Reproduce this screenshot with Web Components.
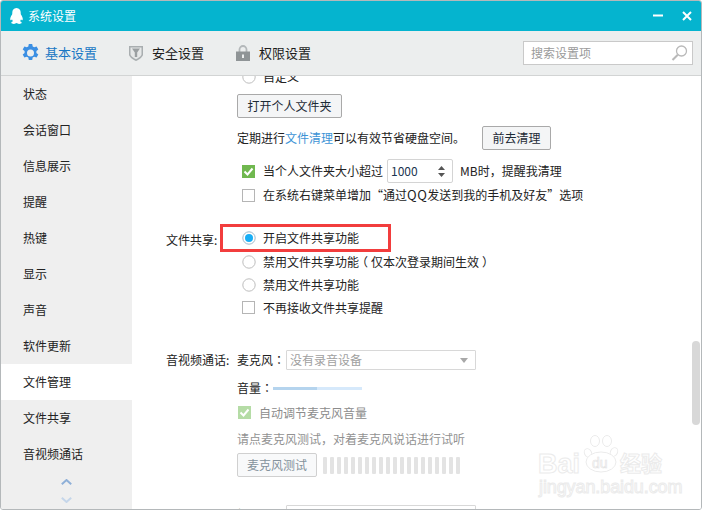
<!DOCTYPE html>
<html lang="zh-CN">
<head>
<meta charset="utf-8">
<title>系统设置</title>
<style>
  html, body { margin: 0; height: 100%; background: #fff; overflow: hidden; }
  body { font: 12px/16px "Noto Sans CJK SC", "Liberation Sans", sans-serif; color: #222; white-space: nowrap; }
</style>
</head>
<body>
<settings-window></settings-window>

<script>
class QqTitlebar extends HTMLElement {
  connectedCallback() {
    if (this.shadowRoot) return;
    this.attachShadow({ mode: "open" }).innerHTML = `
      <style>
        :host { display: flex; align-items: center; height: 30px; background: #05b4cf; color: #fff; padding: 0 0 1px 9px; box-sizing: border-box; }
        .name { margin-left: 5px; flex: 1; }
        svg { display: block; }
        .min { margin-right: 19px; }
        .close { margin-right: 9px; }
      </style>
      <svg width="13" height="16" viewBox="0 0 13 16"><path fill="#fff" d="M6.5 0C3.6 0 2.3 2.2 2.3 4.6c0 .7 0 1.3-.2 1.8C1.2 7.800 .2 9.500 .2 11c0 1 .4 1.300 .7 1.300.4 0 .8-.5 1.100-1 .1.800 .5 1.500 1 2-.8.300-1.700.8-1.700 1.500 0 .8 1.300 1.100 2.600 1.100 1.100 0 2-.3 2.600-.8.6.5 1.500.8 2.600.8 1.300 0 2.600-.3 2.600-1.100 0-.7-.9-1.200-1.700-1.500.5-.5.9-1.200 1-2 .3.500.7 1 1.100 1 .3 0 .7-.3 .7-1.300 0-1.500-1-3.200-1.900-4.600-.2-.5-.2-1.100-.2-1.800C10.700 2.200 9.400 0 6.500 0z"/></svg>
      <span class="name"><slot></slot></span>
      <svg class="min" width="10" height="3" viewBox="0 0 10 3"><rect y=".5" width="10" height="2" fill="#fff"/></svg>
      <svg class="close" width="10" height="10" viewBox="0 0 10 10"><path d="M1 1l8 8M9 1l-8 8" stroke="#fff" stroke-width="2" fill="none"/></svg>
    `;
  }
}

class QqToolbar extends HTMLElement {
  connectedCallback() {
    if (this.shadowRoot) return;
    this.attachShadow({ mode: "open" }).innerHTML = `
      <style>
        :host { display: flex; align-items: center; height: 45px; background: #eceeee; border-bottom: 1px solid #d2d4d4; box-sizing: border-box; padding-left: 21px; font-size: 13px; }
        .tab { display: flex; align-items: center; margin-right: 32px; color: #1c1c1c; }
        .tab svg { display: block; margin-right: 9px; }
        .on { color: #1877c4; }
        .on svg { margin-right: 6px; }
        .search { margin-left: auto; margin-right: 8px; width: 170px; height: 24px; box-sizing: border-box; background: #fff; border: 1px solid #c9c9c9; display: flex; align-items: center; justify-content: space-between; padding: 0 4px 0 7px; color: #9a9a9a; font-size: 12px; }
      </style>
      <div class="tab on">
        <svg width="17" height="18" viewBox="0 0 17 18"><path fill="#3b8fe3" fill-rule="evenodd" d="M6.800 0h3.400l.5 2.500 1.500.8 2.400-.9 1.700 3-1.900 1.700v1.800l1.900 1.700-1.700 3-2.400-.9-1.500.8-.5 2.500H6.800l-.5-2.500-1.500-.8-2.400.9-1.700-3 1.900-1.700V7.100L.7 5.400l1.700-3 2.400.9 1.500-.8zM8.500 5.500a3.500 3.500 0 1 0 0 7 3.500 3.500 0 0 0 0-7z"/></svg>
        基本设置
      </div>
      <div class="tab">
        <svg width="14" height="16" viewBox="0 0 14 16"><path fill="#a9aeb0" d="M0 1h14v8.500c0 2.500-4 5-7 6.500-3-1.500-7-4-7-6.500z"/><path fill="#e6e8e8" d="M1.500 2.500h11v6.800c0 1.700-3 3.700-5.500 5-2.500-1.300-5.500-3.300-5.500-5z"/><path fill="#9ba0a2" d="M3 3.500h8L8.200 7.500V12H5.800V7.500z"/></svg>
        安全设置
      </div>
      <div class="tab">
        <svg width="14" height="16" viewBox="0 0 14 16"><path fill="none" stroke="#b4b8ba" stroke-width="1.800" d="M3.500 7V4.500a3.500 3.500 0 0 1 7 0V7"/><path fill="#8f9496" fill-rule="evenodd" d="M0 6.500h14V16H0zM6 9.500v3.500h2V9.500z"/></svg>
        权限设置
      </div>
      <div class="search">
        <span>搜索设置项</span>
        <svg width="17" height="16" viewBox="0 0 17 16"><circle cx="10.500" cy="6" r="5" fill="none" stroke="#b9b9b9" stroke-width="1.300"/><path d="M6.800 9.700L1.500 15" stroke="#b9b9b9" stroke-width="2"/></svg>
      </div>
    `;
  }
}

class QqSidebar extends HTMLElement {
  connectedCallback() {
    if (this.shadowRoot) return;
    const items = ["状态", "会话窗口", "信息展示", "提醒", "热键", "显示", "声音", "软件更新", "文件管理", "文件共享", "音视频通话"];
    const rows = items.map(t => `<div class="item${t === "文件管理" ? " on" : ""}">${t}</div>`).join("");
    this.attachShadow({ mode: "open" }).innerHTML = `
      <style>
        :host { display: block; width: 131px; flex: none; background: #efefef; overflow: hidden; position: relative; }
        .item { height: 36px; line-height: 36px; padding-left: 22px; color: #222; }
        .on { background: #fff; }
        .arrows { display: flex; flex-direction: column; align-items: center; gap: 12px; margin-top: 7px; }
        svg { display: block; }
      </style>
      ${rows}
      <div class="arrows">
        <svg width="11" height="6" viewBox="0 0 11 6"><path d="M.8 5.200L5.500 1l4.700 4.200" fill="none" stroke="#8fb0d8" stroke-width="2"/></svg>
        <svg width="11" height="6" viewBox="0 0 11 6"><path d="M.8 .8L5.500 5l4.700-4.200" fill="none" stroke="#c5d6ea" stroke-width="2"/></svg>
      </div>
    `;
  }
}

class QqOption extends HTMLElement {
  connectedCallback() {
    if (this.shadowRoot) return;
    const radio = this.getAttribute("type") === "radio";
    const checked = this.hasAttribute("checked");
    const off = this.hasAttribute("disabled");
    let mark;
    if (radio) {
      mark = `<circle cx="7" cy="7" r="6.200" fill="#fff" stroke="${checked ? "#9fb8c8" : "#bdbdbd"}"/>` + (checked ? `<circle cx="7" cy="7" r="4" fill="#18aef5"/>` : "");
    } else if (checked) {
      mark = `<rect width="13" height="13" fill="${off ? "#b5dca6" : "#70b84f"}"/><path d="M2.500 6.500l3 3 5-6" fill="none" stroke="#fff" stroke-width="2"/>`;
    } else {
      mark = `<rect x=".5" y=".5" width="12" height="12" fill="#fff" stroke="#b5b5b5"/>`;
    }
    this.attachShadow({ mode: "open" }).innerHTML = `
      <style>
        :host { display: flex; align-items: center; height: var(--row, 23px); padding-left: var(--indent, 5px); color: ${off ? "#8c8c8c" : "inherit"}; }
        svg { display: block; flex: none; margin-right: ${radio ? 7 : 8}px; }
      </style>
      <svg width="${radio ? 14 : 13}" height="${radio ? 14 : 13}" viewBox="0 0 ${radio ? 14 : 13} ${radio ? 14 : 13}">${mark}</svg>
      <span><slot></slot></span>
    `;
  }
}

class QqButton extends HTMLElement {
  connectedCallback() {
    if (this.shadowRoot) return;
    this.attachShadow({ mode: "open" }).innerHTML = `
      <style>
        :host { display: inline-flex; align-items: center; justify-content: center; height: 24px; box-sizing: border-box; padding: 0 9px; background: #f4f5f6; border: 1px solid #a9a9a9; border-radius: 2px; color: #1d2b36; }
        :host([disabled]) { background: #f8f9fa; border-color: #d0d0d0; color: #84929c; }
      </style>
      <slot></slot>
    `;
  }
}

class QqSelect extends HTMLElement {
  connectedCallback() {
    if (this.shadowRoot) return;
    this.attachShadow({ mode: "open" }).innerHTML = `
      <style>
        :host { display: flex; align-items: center; justify-content: space-between; width: 190px; height: 20px; flex: none; box-sizing: border-box; border: 1px solid #d8d8d8; border-radius: 1px; padding: 0 7px 0 3px; color: #a0a0a0; }
        i { width: 0; height: 0; border: 4.500px solid transparent; border-top: 5px solid #a8a8a8; border-bottom: 0; }
      </style>
      <slot></slot><i></i>
    `;
  }
}

class QqSpinbox extends HTMLElement {
  connectedCallback() {
    if (this.shadowRoot) return;
    this.attachShadow({ mode: "open" }).innerHTML = `
      <style>
        :host { display: flex; align-items: center; justify-content: space-between; width: 66px; height: 24px; box-sizing: border-box; border: 1px solid #d4d4d4; border-radius: 2px; padding: 0 7px 0 3px; margin: 0 7px 0 4px; color: #1a3550; }
        svg { display: block; }
      </style>
      <slot></slot>
      <svg width="7" height="13" viewBox="0 0 7 13"><path d="M3.500 1L7 5H0zM0 8h7l-3.500 4z" fill="#555"/></svg>
    `;
  }
}

class BaiduMark extends HTMLElement {
  connectedCallback() {
    if (this.shadowRoot) return;
    this.attachShadow({ mode: "open" }).innerHTML = `
      <style>
        :host { position: absolute; left: 537px; top: 434px; width: 130px; height: 62px; pointer-events: none; font-family: "Liberation Sans", "Noto Sans CJK SC", sans-serif; color: #fff; -webkit-text-stroke: 1px #ebebeb; }
        .bai { position: absolute; left: 0; top: 15px; font-size: 27px; line-height: 28px; font-weight: bold; }
        .du { position: absolute; left: 54px; top: 19px; font-size: 14px; line-height: 18px; -webkit-text-stroke: .6px #e2e2e2; }
        .jy { position: absolute; left: 82px; top: 17px; font-size: 21px; line-height: 24px; font-weight: bold; }
        .url { position: absolute; left: 1px; top: 42px; font-size: 18px; line-height: 20px; white-space: nowrap; letter-spacing: -.1px; }
        svg { position: absolute; left: 45px; top: 0; }
      </style>
      <span class="bai">Bai</span>
      <svg width="36" height="38" viewBox="0 0 36 38" fill="#fff" stroke="#ebebeb">
        <ellipse cx="5" cy="18" rx="3.500" ry="4.500" transform="rotate(-25 5 18)"/>
        <ellipse cx="12" cy="6" rx="4.500" ry="5.500"/>
        <ellipse cx="24" cy="6" rx="4.500" ry="5.500"/>
        <ellipse cx="31" cy="17" rx="3.500" ry="4.500" transform="rotate(25 31 17)"/>
        <ellipse cx="18" cy="27" rx="15" ry="10"/>
      </svg>
      <span class="du">du</span>
      <span class="jy">经验</span>
      <span class="url">jingyan.baidu.com</span>
    `;
  }
}

class SettingsPanel extends HTMLElement {
  connectedCallback() {
    if (this.shadowRoot) return;
    const bars = Array.from({ length: 20 }, () => "<b></b>").join("");
    this.attachShadow({ mode: "open" }).innerHTML = `
      <style>
        :host { display: block; flex: 1; min-width: 0; background: #fff; overflow: hidden; position: relative; }
        .inner { padding-left: 34px; margin-top: -11px; }
        .sec { display: grid; grid-template-columns: 71px 1fr; position: relative; }
        .row { display: flex; align-items: center; }
        .mt6 { margin-top: 6px; }
        .clean { margin-top: 8px; height: 24px; }
        .clean span span { color: #3d94d6; }
        .clean qq-button { margin-left: 17px; padding: 0; width: 69px; }
        .size { margin-top: 9px; height: 24px; }
        .size qq-option { --row: 24px; }
        .qq { font-size: 13px; line-height: 12px; letter-spacing: .5px; }
        .share { margin-top: 19px; }
        .share .label { padding-top: 6px; }
        .share qq-option:first-child { --row: 24px; }
        .paren { font-feature-settings: "halt"; margin: 0 3px; }
        .red { position: absolute; left: 54px; top: -2px; width: 171px; height: 28px; box-sizing: border-box; border: 3px solid #f23d3d; }
        .media { margin-top: 31px; }
        .media .label { line-height: 20px; }
        .name { width: 49px; flex: none; }
        .colon { font-family: "Noto Sans CJK TC", sans-serif; }
        .vol { margin-top: 8px; height: 20px; }
        .vol .name { width: 36px; }
        .slider { width: 89px; height: 3px; background: linear-gradient(90deg, #b5d4ee 50%, #d6e9fb 50%); }
        .auto { margin-top: 3px; --indent: 1px; }
        .hint { margin-top: 5px; height: 20px; line-height: 20px; color: #929292; }
        .test { margin-top: 4px; height: 24px; }
        .test qq-button { padding: 0; width: 80px; }
        .bars { display: flex; gap: 3px; margin-left: 6px; height: 17px; }
        .bars b { width: 4px; background: #e3e3e3; border-radius: 1px; }
        .speaker { margin-top: 28px; }
        .thumb { position: absolute; left: 560px; top: 265px; width: 8px; height: 84px; border-radius: 4px; background: #d8d8d8; }
      </style>
      <div class="inner">
        <div class="sec">
          <div></div>
          <div>
            <qq-option type="radio" style="--row:23px">自定义</qq-option>
            <qq-button class="mt6" style="width:105px;padding:0">打开个人文件夹</qq-button>
            <div class="row clean"><span>定期进行<span>文件清理</span>可以有效节省硬盘空间。</span><qq-button>前去清理</qq-button></div>
            <div class="row size">
              <qq-option type="check" checked>当个人文件夹大小超过</qq-option>
              <qq-spinbox>1000</qq-spinbox>
              <span>MB时，提醒我清理</span>
            </div>
            <qq-option type="check" style="--row:24px">在系统右键菜单增加“通过<span class="qq">QQ</span>发送到我的手机及好友”选项</qq-option>
          </div>
        </div>
        <div class="sec share">
          <div class="label">文件共享:</div>
          <div>
            <qq-option type="radio" checked>开启文件共享功能</qq-option>
            <qq-option type="radio">禁用文件共享功能<span class="paren">（</span>仅本次登录期间生效<span class="paren">）</span></qq-option>
            <qq-option type="radio">禁用文件共享功能</qq-option>
            <qq-option type="check">不再接收文件共享提醒</qq-option>
          </div>
          <div class="red"></div>
        </div>
        <div class="sec media">
          <div class="label">音视频通话:</div>
          <div>
            <div class="row"><span class="name">麦克风<span class="colon" lang="zh-TW">：</span></span><qq-select>没有录音设备</qq-select></div>
            <div class="row vol"><span class="name">音量<span class="colon" lang="zh-TW">：</span></span><div class="slider"></div></div>
            <qq-option class="auto" type="check" checked disabled>自动调节麦克风音量</qq-option>
            <div class="hint">请点麦克风测试，对着麦克风说话进行试听</div>
            <div class="row test"><qq-button disabled>麦克风测试</qq-button><div class="bars">${bars}</div></div>
            <div class="row speaker"><span class="name">扬声器<span class="colon" lang="zh-TW">：</span></span><qq-select>没有播放设备</qq-select></div>
          </div>
        </div>
      </div>
      <div class="thumb"></div>
    `;
  }
}

class SettingsWindow extends HTMLElement {
  connectedCallback() {
    if (this.shadowRoot) return;
    this.attachShadow({ mode: "open" }).innerHTML = `
      <style>
        :host { display: flex; flex-direction: column; box-sizing: border-box; width: 702px; height: 510px; border: 1px solid #b4b8ba; border-radius: 3px; overflow: hidden; position: relative; background: #fff; }
        .body { display: flex; flex: 1; min-height: 0; }
      </style>
      <qq-titlebar>系统设置</qq-titlebar>
      <qq-toolbar></qq-toolbar>
      <div class="body">
        <qq-sidebar></qq-sidebar>
        <settings-panel></settings-panel>
      </div>
      <baidu-mark></baidu-mark>
    `;
  }
}

customElements.define("qq-titlebar", QqTitlebar);
customElements.define("qq-toolbar", QqToolbar);
customElements.define("qq-sidebar", QqSidebar);
customElements.define("qq-option", QqOption);
customElements.define("qq-button", QqButton);
customElements.define("qq-select", QqSelect);
customElements.define("qq-spinbox", QqSpinbox);
customElements.define("baidu-mark", BaiduMark);
customElements.define("settings-panel", SettingsPanel);
customElements.define("settings-window", SettingsWindow);
</script>
</body>
</html>
